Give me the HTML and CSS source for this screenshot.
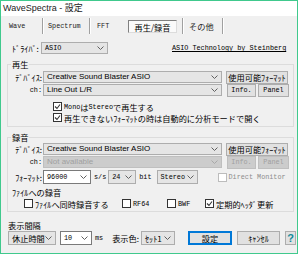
FILE: index.html
```html
<!DOCTYPE html>
<html lang="ja">
<head>
    <meta charset="UTF-8">
    <title>WaveSpectra - 設定</title>
    <link rel="stylesheet" href="styles.css">
</head>
<body>
<div class="window">
    <div class="titlebar">WaveSpectra - 設定</div>

    <div class="tabs">
        <span class="tab t1 m">Wave</span><span class="sep"></span>
        <span class="tab t2 m">Spectrum</span><span class="sep"></span>
        <span class="tab t3 m">FFT</span>
        <span class="tab t4 active">再生/録音</span><span class="sep"></span>
        <span class="tab t5">その他</span><span class="sep"></span>
    </div>

    <div class="content">
        <div class="row driver">
            <span class="lbl-drv">ﾄﾞﾗｲﾊﾞ:</span>
            <span class="sel w-drv"><span class="m">ASIO</span><svg class="chev" width="7" height="4"><polyline points="0.5,0.5 3.5,3.5 6.5,0.5"/></svg></span>
            <span class="link m">ASIO Technology by Steinberg</span>
        </div>

        <fieldset class="group play">
            <legend>再生</legend>
            <div class="row">
                <span class="lbl">ﾃﾞﾊﾞｲｽ:</span>
                <span class="sel w-dev"><span class="p">Creative Sound Blaster ASIO</span><svg class="chev" width="7" height="4"><polyline points="0.5,0.5 3.5,3.5 6.5,0.5"/></svg></span>
                <span class="btn w-fmt">使用可能ﾌｫｰﾏｯﾄ</span>
            </div>
            <div class="row">
                <span class="lbl m">ch:</span>
                <span class="sel w-dev"><span class="p">Line Out L/R</span><svg class="chev" width="7" height="4"><polyline points="0.5,0.5 3.5,3.5 6.5,0.5"/></svg></span>
                <span class="btn w-info m">Info.</span>
                <span class="btn w-panel m">Panel</span>
            </div>
            <label class="check ind first"><span class="box"><svg width="7" height="7"><polyline points="1,3.5 3,5.5 6,1.5"/></svg></span><span class="m">Mono</span>は<span class="m">Stereo</span>で再生する</label>
            <label class="check ind"><span class="box"><svg width="7" height="7"><polyline points="1,3.5 3,5.5 6,1.5"/></svg></span>再生できないﾌｫｰﾏｯﾄの時は自動的に分析モードで開く</label>
        </fieldset>

        <fieldset class="group rec">
            <legend>録音</legend>
            <div class="row">
                <span class="lbl">ﾃﾞﾊﾞｲｽ:</span>
                <span class="sel w-dev"><span class="p">Creative Sound Blaster ASIO</span><svg class="chev" width="7" height="4"><polyline points="0.5,0.5 3.5,3.5 6.5,0.5"/></svg></span>
                <span class="btn w-fmt">使用可能ﾌｫｰﾏｯﾄ</span>
            </div>
            <div class="row off">
                <span class="lbl m">ch:</span>
                <span class="sel w-dev"><span class="p">Not available</span><svg class="chev" width="7" height="4"><polyline points="0.5,0.5 3.5,3.5 6.5,0.5"/></svg></span>
                <span class="btn w-info m">Info.</span>
                <span class="btn w-panel m">Panel</span>
            </div>
            <div class="row fmt">
                <span class="lbl">ﾌｫｰﾏｯﾄ:</span>
                <span class="combo w-rate"><span class="m">96000</span><svg class="chev" width="7" height="4"><polyline points="0.5,0.5 3.5,3.5 6.5,0.5"/></svg></span>
                <span class="unit m">s/s</span>
                <span class="sel w-bit"><span class="m">24</span><svg class="chev" width="7" height="4"><polyline points="0.5,0.5 3.5,3.5 6.5,0.5"/></svg></span>
                <span class="unit m">bit</span>
                <span class="sel w-ch"><span class="m">Stereo</span><svg class="chev" width="7" height="4"><polyline points="0.5,0.5 3.5,3.5 6.5,0.5"/></svg></span>
                <label class="check dm off"><span class="box"></span><span class="m">Direct Monitor</span></label>
            </div>
            <div class="sub">ﾌｧｲﾙへの録音</div>
            <div class="row files">
                <label class="check c1"><span class="box"></span>ﾌｧｲﾙへ同時録音する</label>
                <label class="check c2"><span class="box"></span><span class="m">RF64</span></label>
                <label class="check c3"><span class="box"></span><span class="m">BWF</span></label>
                <label class="check c4"><span class="box"><svg width="7" height="7"><polyline points="1,3.5 3,5.5 6,1.5"/></svg></span>定期的ﾍｯﾀﾞ更新</label>
            </div>
        </fieldset>

        <div class="interval">表示間隔</div>
        <div class="row bottom">
            <span class="sel w-mode"><span>休止時間</span><svg class="chev" width="7" height="4"><polyline points="0.5,0.5 3.5,3.5 6.5,0.5"/></svg></span>
            <span class="combo w-ms"><span class="m">10</span><svg class="chev" width="7" height="4"><polyline points="0.5,0.5 3.5,3.5 6.5,0.5"/></svg></span>
            <span class="unit m">ms</span>
            <span class="color-lbl">表示色:</span>
            <span class="sel w-set"><span>ｾｯﾄ1</span><svg class="chev" width="7" height="4"><polyline points="0.5,0.5 3.5,3.5 6.5,0.5"/></svg></span>
            <span class="btn default w-ok">設定</span>
            <span class="btn w-cancel">ｷｬﾝｾﾙ</span>
            <span class="btn w-help help">?</span>
        </div>
    </div>
</div>
</body>
</html>
```

FILE: styles.css
```css
body {
    margin: 0;
    background: #ffffff;
    font-family: "Noto Sans CJK JP", sans-serif;
    font-size: 8.2px;
    line-height: 10px;
    color: #000;
}
.window {
    width: 298px;
    height: 254px;
    box-sizing: border-box;
    border: 1px solid #40c98d;
    background: #f0f0f0;
}
.titlebar {
    height: 15px;
    background: #fff;
    padding-left: 2px;
    font-family: "Liberation Sans", "Noto Sans CJK JP", sans-serif;
    font-size: 9px;
    line-height: 14px;
    color: #222;
}
.m {
    font-family: "Liberation Mono", monospace;
    font-size: 6.8px;
}
.p {
    font-family: "Liberation Sans", sans-serif;
    font-size: 8px;
}

/* tab strip */
.tabs {
    display: flex;
    align-items: center;
    height: 20px;
    color: #222;
}
.tab {
    box-sizing: border-box;
    height: 13px;
    line-height: 12px;
}
.t1 { width: 41px; padding-left: 8px; }
.t2 { width: 45px; padding-left: 4px; }
.t3 { width: 37px; padding-left: 6px; }
.t4 { width: 49px; margin-right: 5px; }
.t5 { width: 38px; padding-left: 5px; }
.tab.active {
    border: 1px solid #808080;
    border-right-color: #dcdcdc;
    border-bottom-color: #dcdcdc;
    background: #fafafa;
    text-align: center;
    color: #000;
}
.sep {
    width: 1px;
    height: 16px;
    background: #a0a0a0;
    border-right: 1px solid #fff;
}

.content {
    padding-top: 6px;
}
.row {
    display: flex;
    align-items: center;
    height: 12px;
}

/* controls */
.sel, .combo {
    box-sizing: border-box;
    height: 12px;
    display: flex;
    align-items: center;
    justify-content: space-between;
    padding: 0 3px;
    border: 1px solid #adadad;
    background: #e5e5e5;
    white-space: nowrap;
}
.combo {
    background: #fff;
    border-color: #7a7a7a;
}
.chev {
    flex: none;
    fill: none;
    stroke: #606060;
    stroke-width: 1;
}
.btn {
    box-sizing: border-box;
    height: 13px;
    display: flex;
    align-items: center;
    justify-content: center;
    border: 1px solid #adadad;
    background: #e1e1e1;
    white-space: nowrap;
}
.btn.default {
    border-color: #0078d7;
    box-shadow: inset 0 0 0 1px #0078d7;
}
.help {
    color: #138a9a;
    font-family: "Liberation Sans", sans-serif;
    font-weight: bold;
    font-size: 11px;
}
.off .sel, .off .btn {
    color: #a0a0a0;
    background: #cccccc;
    border-color: #bfbfbf;
}
.off .chev {
    stroke: #a8a8a8;
}
.check.off {
    color: #8c8c8c;
}
.check.off .box {
    border-color: #bcbcbc;
}

/* driver row */
.lbl-drv {
    margin-left: 11px;
    width: 29px;
}
.w-drv {
    width: 67px;
}
.link {
    margin-left: 64px;
    text-decoration: underline;
}

/* group boxes */
.group {
    margin: 5px 3px 0 6px;
    padding: 0 0 3px 0;
    border: 1px solid #dcdcdc;
}
.group legend {
    padding: 0 1px;
    margin-left: 3px;
}
.group .row + .row {
    margin-top: 1px;
}
.lbl {
    width: 34px;
    text-align: right;
    padding-right: 1px;
    flex: none;
}
.w-dev { width: 179px; }
.w-fmt { width: 62px; margin-left: 4px; }
.w-info { width: 29px; margin-left: 5px; }
.w-panel { width: 31px; margin-left: 2px; }
.play .row:first-of-type {
    margin-top: 2px;
}

.check {
    display: flex;
    align-items: center;
    white-space: nowrap;
}
.box {
    flex: none;
    box-sizing: border-box;
    width: 9px;
    height: 9px;
    border: 1px solid #333;
    background: #fff;
    margin-right: 2px;
}
.box svg {
    display: block;
    fill: none;
    stroke: #333;
    stroke-width: 1.1;
}
.ind {
    margin-left: 45px;
    height: 11px;
}
.ind.first {
    margin-top: 5px;
}

.group.rec {
    padding-bottom: 2px;
}
.rec .row:first-of-type {
    margin-top: 1px;
}
.group .row.fmt {
    margin-top: 2px;
    height: 14px;
}
.w-rate { width: 48px; height: 14px; }
.unit { margin: 0 2px 0 3px; }
.w-bit { width: 28px; height: 14px; }
.w-ch { width: 41px; height: 14px; margin-left: 3px; }
.dm { margin-left: 20px; }
.sub {
    margin: 3px 0 0 4px;
}
.group .row.files {
    margin-top: 1px;
    height: 11px;
}
.c1 { margin-left: 16px; width: 98px; }
.c2 { width: 45px; }
.c3 { width: 38px; }

/* bottom */
.interval {
    margin: 8px 0 0 7px;
}
.row.bottom {
    height: 14px;
    margin: 1px 0 0 7px;
}
.bottom .sel, .bottom .combo, .bottom .btn {
    height: 14px;
}
.w-mode { width: 48px; }
.w-ms { width: 32px; margin-left: 4px; }
.color-lbl { margin-left: 7px; }
.w-set { width: 34px; margin-left: 2px; }
.w-ok { width: 44px; margin-left: 13px; }
.w-cancel { width: 43px; margin-left: 5px; }
.w-help { width: 11px; margin-left: 5px; }
```
